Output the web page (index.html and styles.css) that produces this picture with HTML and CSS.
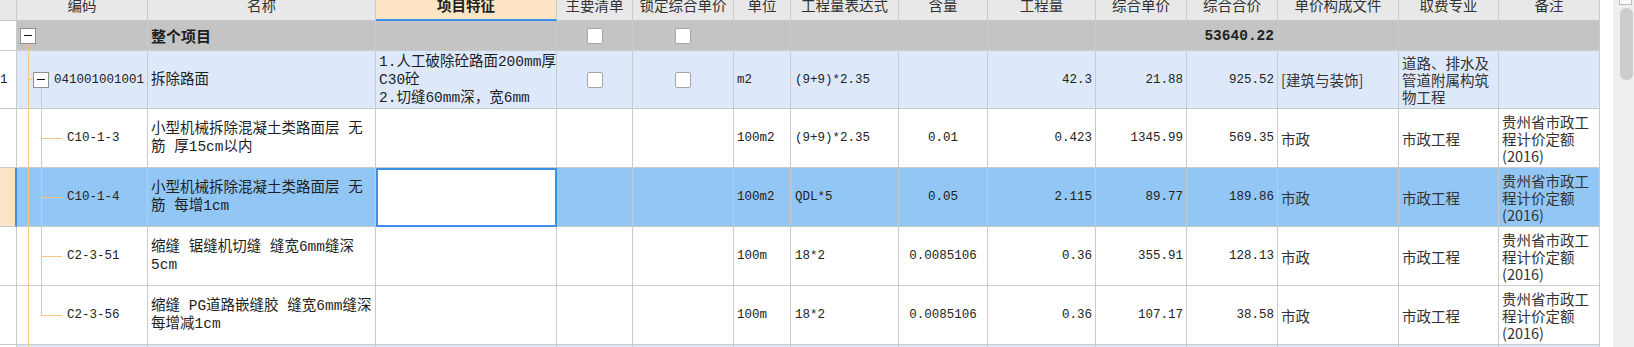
FILE: index.html
```html
<!DOCTYPE html>
<html lang="zh-CN">
<head>
    <meta charset="UTF-8">
    <title>分部分项工程</title>
    <link rel="stylesheet" href="styles.css">
</head>
<body>
    <div class="sheet">
        <div class="grid">
            <div class="row head">
                <div class="c"></div>
                <div class="c">编码</div>
                <div class="c">名称</div>
                <div class="c active">项目特征</div>
                <div class="c">主要清单</div>
                <div class="c">锁定综合单价</div>
                <div class="c">单位</div>
                <div class="c">工程量表达式</div>
                <div class="c">含量</div>
                <div class="c">工程量</div>
                <div class="c">综合单价</div>
                <div class="c">综合合价</div>
                <div class="c">单价构成文件</div>
                <div class="c">取费专业</div>
                <div class="c">备注</div>
            </div>

            <div class="row total">
                <div class="c no"></div>
                <div class="c code root"><span class="tog"></span></div>
                <div class="c name"><b>整个项目</b></div>
                <div class="c"></div>
                <div class="c ctr"><span class="chk"></span></div>
                <div class="c ctr"><span class="chk"></span></div>
                <div class="c"></div>
                <div class="c"></div>
                <div class="c"></div>
                <div class="c"></div>
                <div class="c"></div>
                <div class="c num sum">53640.22</div>
                <div class="c"></div>
                <div class="c"></div>
                <div class="c"></div>
            </div>

            <div class="row item">
                <div class="c no">1</div>
                <div class="c code lvl1"><span class="tog"></span><span class="key">041001001001</span></div>
                <div class="c name">拆除路面</div>
                <div class="c name">1.人工破除砼路面200mm厚<br>C30砼<br>2.切缝60mm深，宽6mm</div>
                <div class="c ctr"><span class="chk"></span></div>
                <div class="c ctr"><span class="chk"></span></div>
                <div class="c mono">m2</div>
                <div class="c mono expr">(9+9)*2.35</div>
                <div class="c"></div>
                <div class="c num">42.3</div>
                <div class="c num">21.88</div>
                <div class="c num">925.52</div>
                <div class="c txt">[建筑与装饰]</div>
                <div class="c txt">道路、排水及管道附属构筑物工程</div>
                <div class="c txt"></div>
            </div>

            <div class="row sub">
                <div class="c no"></div>
                <div class="c code lvl2">C10-1-3</div>
                <div class="c name">小型机械拆除混凝土类路面层 无<br>筋 厚15cm以内</div>
                <div class="c"></div>
                <div class="c"></div>
                <div class="c"></div>
                <div class="c mono">100m2</div>
                <div class="c mono expr">(9+9)*2.35</div>
                <div class="c num ctr">0.01</div>
                <div class="c num">0.423</div>
                <div class="c num">1345.99</div>
                <div class="c num">569.35</div>
                <div class="c txt">市政</div>
                <div class="c txt">市政工程</div>
                <div class="c txt">贵州省市政工程计价定额(2016)</div>
            </div>

            <div class="row sub sel">
                <div class="c no"></div>
                <div class="c code lvl2">C10-1-4</div>
                <div class="c name">小型机械拆除混凝土类路面层 无<br>筋 每增1cm</div>
                <div class="c edit"></div>
                <div class="c"></div>
                <div class="c"></div>
                <div class="c mono">100m2</div>
                <div class="c mono expr">QDL*5</div>
                <div class="c num ctr">0.05</div>
                <div class="c num">2.115</div>
                <div class="c num">89.77</div>
                <div class="c num">189.86</div>
                <div class="c txt">市政</div>
                <div class="c txt">市政工程</div>
                <div class="c txt">贵州省市政工程计价定额(2016)</div>
            </div>

            <div class="row sub">
                <div class="c no"></div>
                <div class="c code lvl2">C2-3-51</div>
                <div class="c name">缩缝 锯缝机切缝 缝宽6mm缝深<br>5cm</div>
                <div class="c"></div>
                <div class="c"></div>
                <div class="c"></div>
                <div class="c mono">100m</div>
                <div class="c mono expr">18*2</div>
                <div class="c num ctr">0.0085106</div>
                <div class="c num">0.36</div>
                <div class="c num">355.91</div>
                <div class="c num">128.13</div>
                <div class="c txt">市政</div>
                <div class="c txt">市政工程</div>
                <div class="c txt">贵州省市政工程计价定额(2016)</div>
            </div>

            <div class="row sub">
                <div class="c no"></div>
                <div class="c code lvl2 last">C2-3-56</div>
                <div class="c name">缩缝 PG道路嵌缝胶 缝宽6mm缝深<br>每增减1cm</div>
                <div class="c"></div>
                <div class="c"></div>
                <div class="c"></div>
                <div class="c mono">100m</div>
                <div class="c mono expr">18*2</div>
                <div class="c num ctr">0.0085106</div>
                <div class="c num">0.36</div>
                <div class="c num">107.17</div>
                <div class="c num">38.58</div>
                <div class="c txt">市政</div>
                <div class="c txt">市政工程</div>
                <div class="c txt">贵州省市政工程计价定额(2016)</div>
            </div>

            <div class="row item">
                <div class="c no">2</div>
                <div class="c code lvl1"><span class="tog"></span><span class="key">041001002001</span></div>
                <div class="c name">拆除人行道</div>
                <div class="c name">1.人工拆除人行道板<br>2.含垫层<br>3.外运</div>
                <div class="c ctr"><span class="chk"></span></div>
                <div class="c ctr"><span class="chk"></span></div>
                <div class="c mono">m2</div>
                <div class="c mono expr"></div>
                <div class="c"></div>
                <div class="c num"></div>
                <div class="c num"></div>
                <div class="c num"></div>
                <div class="c txt">[建筑与装饰]</div>
                <div class="c txt">道路、排水及管道附属构筑物工程</div>
                <div class="c txt"></div>
            </div>
        </div>

        <div class="vbar">
            <div class="arrow"></div>
            <div class="thumb"></div>
        </div>
    </div>
</body>
</html>
```

FILE: styles.css
```css
* {
    box-sizing: border-box;
}
body {
    margin: 0;
    background: #fff;
    font-family: "Noto Sans CJK SC", "Noto Sans", sans-serif;
    font-size: 14.5px;
    color: #222;
    overflow: hidden;
}
.sheet {
    display: flex;
    height: 347px;
    overflow: hidden;
}
.grid {
    width: 1600px;
    flex: none;
}
.row {
    display: grid;
    grid-template-columns: 17px 131px 228px 181px 76px 101px 57px 108px 89px 108px 91px 91px 121px 100px 101px;
    height: 59px;
}
.c {
    display: flex;
    align-items: center;
    padding: 0 3px;
    border-right: 1px solid #cacaca;
    border-bottom: 1px solid #cacaca;
    overflow: hidden;
    white-space: nowrap;
}

/* header */
.head {
    height: 21px;
    background: #e8e8e8;
    color: #333;
}
.head .c {
    justify-content: center;
    line-height: 10px;
    padding-bottom: 10px;
}
.head .active {
    background: #fde5c6;
    font-weight: bold;
    color: #222;
    border-bottom: 2px solid #3d8ee6;
}

/* row kinds */
.total {
    height: 30px;
    background: #c4c4c4;
}
.item {
    height: 58px;
    background: #dde9fb;
}
.sub {
    background: #fff;
}
.sel {
    background: #92c6f4;
}
.no {
    background: #fff;
    padding: 0;
    font-family: "Liberation Mono", monospace;
    font-size: 12.5px;
}
.sel .no {
    background: #fde4c6;
    border-right: 2px solid #3b8ee6;
}
.edit {
    background: #fff;
    border: 2px solid #3d8fe8;
}

/* tree column */
.code {
    --g: #f9c47c;
    font-family: "Liberation Mono", monospace;
    font-size: 12.5px;
}
.root {
    padding-left: 3px;
    background: linear-gradient(var(--g), var(--g)) 11px 22px / 1px 100% no-repeat;
}
.lvl1 {
    padding-left: 16px;
    background:
        linear-gradient(var(--g), var(--g)) 11px 0 / 1px 100% no-repeat,
        linear-gradient(var(--g), var(--g)) 11px 50% / 6px 1px no-repeat,
        linear-gradient(var(--g), var(--g)) 24px 37px / 1px 100% no-repeat;
}
.lvl1 .key {
    margin-left: 5px;
}
.lvl2 {
    padding-left: 50px;
    background:
        linear-gradient(var(--g), var(--g)) 11px 0 / 1px 100% no-repeat,
        linear-gradient(var(--g), var(--g)) 24px 0 / 1px 100% no-repeat,
        linear-gradient(var(--g), var(--g)) 24px 50% / 21px 1px no-repeat;
}
.lvl2.last {
    background:
        linear-gradient(var(--g), var(--g)) 11px 0 / 1px 100% no-repeat,
        linear-gradient(var(--g), var(--g)) 24px 0 / 1px 50% no-repeat,
        linear-gradient(var(--g), var(--g)) 24px 50% / 21px 1px no-repeat;
}
.tog {
    flex: none;
    width: 16px;
    height: 16px;
    border: 1px solid #909090;
    background: #fff;
    display: flex;
    align-items: center;
    justify-content: center;
}
.tog::before {
    content: "";
    width: 8px;
    height: 1px;
    background: #111;
}

/* cell contents */
.name {
    font-family: "Liberation Mono", "Noto Sans CJK SC", monospace;
    line-height: 18px;
    color: #1e1e1e;
}
.name b {
    font-family: "Noto Sans CJK SC", sans-serif;
    font-size: 15px;
}
.ctr {
    justify-content: center;
}
.chk {
    width: 16px;
    height: 16px;
    background: #fff;
    border: 1px solid #a6a6a6;
    border-radius: 2px;
}
.mono {
    font-family: "Liberation Mono", monospace;
    font-size: 12.5px;
}
.expr {
    padding-left: 4px;
}
.num {
    justify-content: flex-end;
    font-family: "Liberation Mono", monospace;
    font-size: 12.5px;
}
.num.ctr {
    justify-content: center;
}
.sum {
    font-weight: bold;
    font-size: 14.5px;
}
.txt {
    white-space: normal;
    line-height: 17px;
    color: #333;
    padding-right: 4px;
}

/* scrollbar */
.vbar {
    flex: none;
    width: 21px;
    margin-left: 13px;
    background: #efefef;
}
.vbar .arrow {
    height: 5px;
    margin: 0 2px 0 6px;
    border: 1px solid #bdbdbd;
    border-top: none;
    background: #fafafa;
}
.vbar .thumb {
    height: 72px;
    margin: 3px 1px 0 7px;
    border-radius: 6px;
    background: #cdcdcd;
}
```
